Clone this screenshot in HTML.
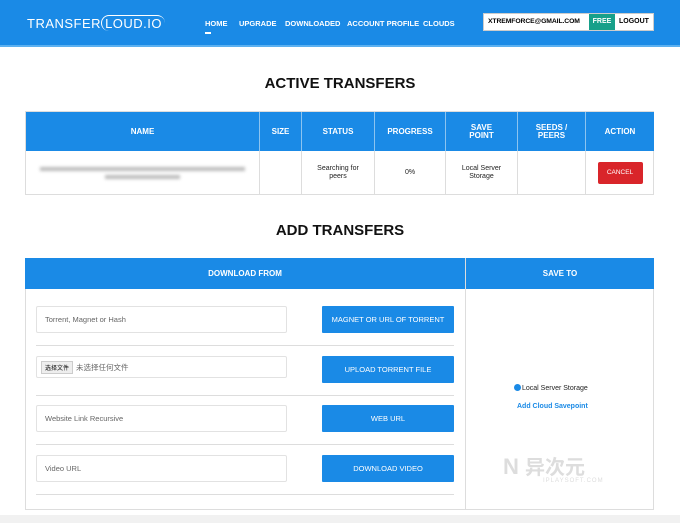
<!DOCTYPE html>
<html><head><meta charset="utf-8"><style>
*{box-sizing:border-box;margin:0;padding:0}
body{width:680px;height:523px;background:#fff;font-family:"Liberation Sans","Noto Sans CJK SC",sans-serif;position:relative;overflow:hidden}
.hdr{position:absolute;left:0;top:0;width:680px;height:47px;background:#1a8ae6;border-bottom:2px solid #5bb0f0}
.logo{position:absolute;left:27px;top:16px;color:#fff;font-size:13px;letter-spacing:.5px;font-weight:300}
.nav{position:absolute;top:19px;color:#fff;font-size:7.5px;font-weight:bold}
.acct{position:absolute;left:483px;top:13px;width:171px;height:18px;background:#fff;border:1px solid #ccc;font-size:7px;font-weight:bold;white-space:nowrap}
h2{position:absolute;width:680px;text-align:center;font-size:15px;font-weight:bold;color:#111}
.t1{position:absolute;left:25px;top:111px;width:629px;height:84px;border:1px solid #ddd}
.cell{position:absolute;display:flex;align-items:center;justify-content:center;text-align:center;font-size:7.5px;line-height:8px}
.th{background:#1a8ae6;color:#fff;font-weight:bold;font-size:8px;top:0;height:39px;border-right:1px solid #8cc4f0}
.td{top:39px;height:44px;border-right:1px solid #ddd;color:#222;font-size:7px}
.btn{position:absolute;left:322px;width:132px;height:27px;background:#1a8ae6;color:#fff;font-size:7.5px;display:flex;align-items:center;justify-content:center;border-radius:1px}
.inp{position:absolute;left:36px;width:251px;height:27px;border:1px solid #e2e2e2;border-radius:2px;font-size:7.5px;color:#666;padding-left:8px;display:flex;align-items:center}
.sep{position:absolute;left:36px;width:418px;height:1px;background:#ddd}
</style></head><body>
<div class="hdr">
<div class="logo">TRANSFER<span style="border:1px solid #fff;border-radius:10px 10px 0 10px;padding:0 3px;border-right:none;border-bottom:none">LOUD.IO</span></div>
<div class="nav" style="left:205px">HOME<div style="width:6px;height:2px;background:#fff;margin-top:4px"></div></div>
<div class="nav" style="left:239px">UPGRADE</div>
<div class="nav" style="left:285px">DOWNLOADED</div>
<div class="nav" style="left:347px">ACCOUNT PROFILE</div>
<div class="nav" style="left:423px">CLOUDS</div>
<div class="acct"><span style="position:absolute;left:4px;top:4px;font-size:6.8px;letter-spacing:-.1px">XTREMFORCE@GMAIL.COM</span><span style="position:absolute;left:105px;top:0;width:26px;height:16px;background:#17a08a;color:#fff;text-align:center;line-height:16px">FREE</span><span style="position:absolute;left:135px;top:4px">LOGOUT</span></div>
</div>
<h2 style="top:75px">ACTIVE TRANSFERS</h2>
<div class="t1">
<div class="cell th" style="left:0;width:234px">NAME</div>
<div class="cell th" style="left:234px;width:42px">SIZE</div>
<div class="cell th" style="left:276px;width:73px">STATUS</div>
<div class="cell th" style="left:349px;width:71px">PROGRESS</div>
<div class="cell th" style="left:420px;width:72px">SAVE<br>POINT</div>
<div class="cell th" style="left:492px;width:68px">SEEDS /<br>PEERS</div>
<div class="cell th" style="left:560px;width:68px;border-right:none">ACTION</div>
<div class="cell td" style="left:0;width:234px"><div><div style="width:205px;height:4px;background:#bbb;filter:blur(1.5px);margin:0 auto 4px"></div><div style="width:75px;height:4px;background:#bbb;filter:blur(1.5px);margin:0 auto"></div></div></div>
<div class="cell td" style="left:234px;width:42px"></div>
<div class="cell td" style="left:276px;width:73px">Searching for<br>peers</div>
<div class="cell td" style="left:349px;width:71px">0%</div>
<div class="cell td" style="left:420px;width:72px">Local Server<br>Storage</div>
<div class="cell td" style="left:492px;width:68px"></div>
<div class="cell td" style="left:560px;width:68px;border-right:none"><div style="width:45px;height:22px;background:#d9252a;color:#fff;font-size:6.5px;line-height:22px;border-radius:2px">CANCEL</div></div>
</div>
<h2 style="top:222px">ADD TRANSFERS</h2>
<div style="position:absolute;left:25px;top:258px;width:629px;height:252px;border:1px solid #ddd"></div>
<div class="cell" style="left:25px;top:258px;width:440px;height:31px;background:#1a8ae6;color:#fff;font-weight:bold;font-size:8px">DOWNLOAD FROM</div>
<div class="cell" style="left:466px;top:258px;width:188px;height:31px;background:#1a8ae6;color:#fff;font-weight:bold;font-size:8px">SAVE TO</div>
<div style="position:absolute;left:465px;top:258px;width:1px;height:252px;background:#ddd"></div>
<div class="inp" style="top:306px">Torrent, Magnet or Hash</div>
<div class="inp" style="top:356px;height:22px;padding-left:4px"><span style="background:#eee;border:1px solid #ccc;font-size:6px;padding:1px 3px;color:#000;margin-right:3px">选择文件</span>未选择任何文件</div>
<div class="inp" style="top:405px">Website Link Recursive</div>
<div class="inp" style="top:455px">Video URL</div>
<div class="btn" style="top:306px">MAGNET OR URL OF TORRENT</div>
<div class="btn" style="top:356px">UPLOAD TORRENT FILE</div>
<div class="btn" style="top:405px">WEB URL</div>
<div class="btn" style="top:455px">DOWNLOAD VIDEO</div>
<div class="sep" style="top:345px"></div><div class="sep" style="top:395px"></div><div class="sep" style="top:444px"></div><div class="sep" style="top:494px"></div>
<div style="position:absolute;left:514px;top:384px;font-size:7px;color:#222"><span style="display:inline-block;width:7px;height:7px;border-radius:50%;background:#1a8ae6;vertical-align:-1px;margin-right:1px"></span>Local Server Storage</div>
<div style="position:absolute;left:517px;top:403px;font-size:7px;color:#1a8ae6;font-weight:bold">Add Cloud Savepoint</div>
<div style="position:absolute;left:503px;top:451px;font-size:22px;color:#ddd;font-weight:bold">N <span style="font-size:20px">异次元</span></div>
<div style="position:absolute;left:543px;top:478px;font-size:6px;color:#ddd;letter-spacing:1px">IPLAYSOFT.COM</div>
<div style="position:absolute;left:0;top:515px;width:680px;height:8px;background:#f1f1f1"></div>
</body></html>
